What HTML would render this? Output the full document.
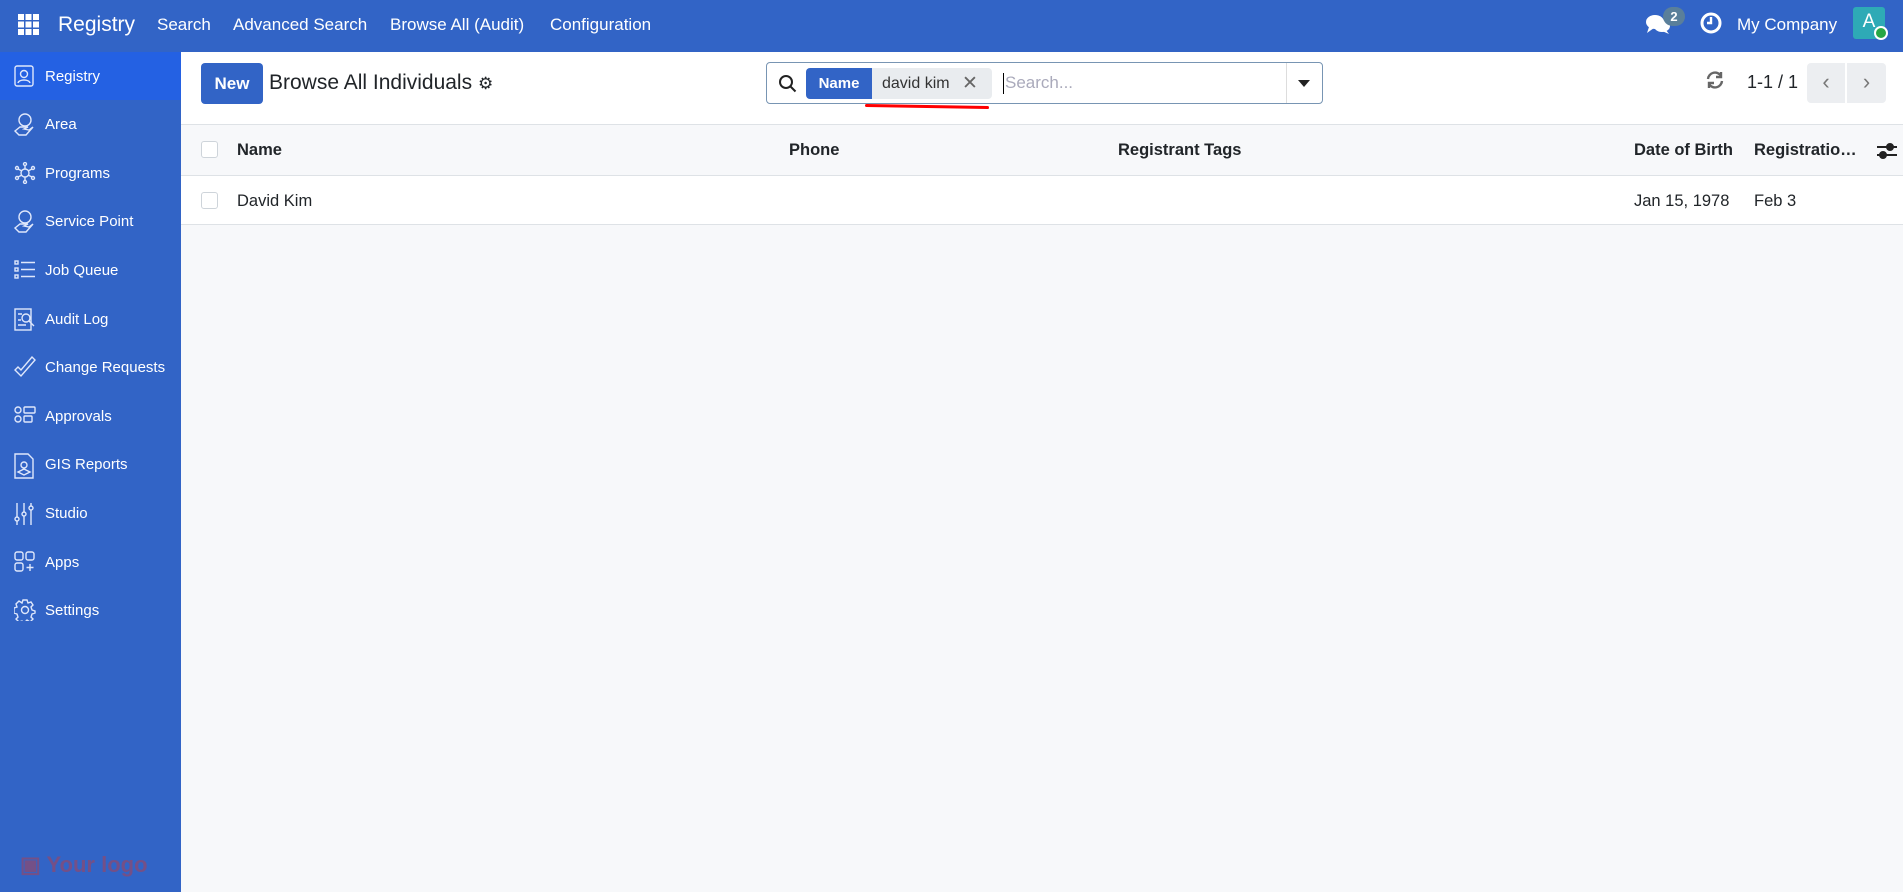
<!DOCTYPE html>
<html><head><meta charset="utf-8"><style>
*{box-sizing:border-box;margin:0;padding:0}
body{width:1903px;height:892px;overflow:hidden;font-family:"Liberation Sans",sans-serif;background:#f7f8fa;position:relative;color:#212529}
.nav{position:absolute;left:0;top:0;width:1903px;height:52px;background:#3264c6;color:#fff}
.nav span{position:absolute;top:15px;font-size:17px}
.side{position:absolute;left:0;top:52px;width:181px;height:840px;background:#3264c6;color:#fff}
.it{position:absolute;left:0;width:181px;height:48px;font-size:15px}
.it .t{position:absolute;left:45px;top:16px}
.it svg{position:absolute;left:14px;top:13px}
.cp{position:absolute;left:181px;top:52px;width:1722px;height:73px;background:#fff;border-bottom:1px solid #dee2e6}
.th{position:absolute;left:181px;top:125px;width:1722px;height:51px;background:#f7f8fa;border-bottom:1px solid #dee2e6;font-weight:bold;font-size:16.5px}
.tr{position:absolute;left:181px;top:176px;width:1722px;height:49px;background:#fff;border-bottom:1px solid #dee2e6;font-size:16.5px}
.th span,.tr span{position:absolute;top:16px}
.cb{position:absolute;left:20px;top:16px;width:17px;height:17px;border:1px solid #ced4da;border-radius:3px;background:#fff}
</style></head><body>
<div class="nav">
<svg style="position:absolute;left:18px;top:14px" width="21" height="21" viewBox="0 0 21 21" fill="#fff"><rect x="0" y="0" width="6" height="6"/><rect x="7.5" y="0" width="6" height="6"/><rect x="15" y="0" width="6" height="6"/><rect x="0" y="7.5" width="6" height="6"/><rect x="7.5" y="7.5" width="6" height="6"/><rect x="15" y="7.5" width="6" height="6"/><rect x="0" y="15" width="6" height="6"/><rect x="7.5" y="15" width="6" height="6"/><rect x="15" y="15" width="6" height="6"/></svg>
<span style="left:58px;top:13px;font-size:21px">Registry</span>
<span style="left:157px">Search</span>
<span style="left:233px">Advanced Search</span>
<span style="left:390px">Browse All (Audit)</span>
<span style="left:550px">Configuration</span>
<svg style="position:absolute;left:1646px;top:13px" width="26" height="22" viewBox="0 0 26 22" fill="#fff"><ellipse cx="9" cy="9" rx="9" ry="7"/><path d="M3 14 L1 20 L8 15Z"/><ellipse cx="16" cy="13" rx="8" ry="6"/><path d="M20 17 L23 21 L16 18Z"/></svg>
<div style="position:absolute;left:1663px;top:7px;width:22px;height:19px;border-radius:10px;background:#5a7f9a;color:#fff;font-size:13px;font-weight:bold;text-align:center;line-height:19px">2</div>
<svg style="position:absolute;left:1700px;top:12px" width="22" height="22" viewBox="0 0 22 22"><circle cx="11" cy="11" r="9" fill="none" stroke="#fff" stroke-width="3"/><path d="M11 5v6h-4" fill="none" stroke="#fff" stroke-width="2.4"/></svg>
<span style="left:1737px">My Company</span>
<div style="position:absolute;left:1853px;top:7px;width:32px;height:32px;background:#2eaab6;border-radius:3px;color:#fff;font-size:19px;text-align:center;line-height:30px">A</div>
<div style="position:absolute;left:1874px;top:26px;width:14px;height:14px;border-radius:50%;background:#28a745;border:2px solid #fff"></div>
</div>
<div class="side">
<div class="it" style="top:0;background:#2461e3"><svg width="20" height="22" viewBox="0 0 20 22" fill="none" stroke="#dfe7fb" stroke-width="1.4"><rect x="1" y="1" width="18" height="20" rx="2"/><circle cx="10" cy="9" r="3.5"/><path d="M4 18c1-4 11-4 12 0"/></svg><span class="t">Registry</span></div>
<div class="it" style="top:48px"><svg width="20" height="24" viewBox="0 0 20 24" fill="none" stroke="#dfe7fb" stroke-width="1.4"><circle cx="11" cy="7" r="6"/><path d="M1 18l5-4h8l-4 2 5 1 4-3-7 8H5z"/></svg><span class="t">Area</span></div>
<div class="it" style="top:97px"><svg width="22" height="22" viewBox="0 0 22 22" fill="none" stroke="#dfe7fb" stroke-width="1.4"><circle cx="11" cy="11" r="4"/><circle cx="11" cy="2" r="1.5"/><circle cx="11" cy="20" r="1.5"/><circle cx="3" cy="6" r="1.5"/><circle cx="19" cy="6" r="1.5"/><circle cx="3" cy="16" r="1.5"/><circle cx="19" cy="16" r="1.5"/><path d="M11 4v3M11 15v3M4 7l4 2M18 7l-4 2M4 15l4-2M18 15l-4-2"/></svg><span class="t">Programs</span></div>
<div class="it" style="top:145px"><svg width="20" height="24" viewBox="0 0 20 24" fill="none" stroke="#dfe7fb" stroke-width="1.4"><circle cx="11" cy="7" r="6"/><path d="M1 18l5-4h8l-4 2 5 1 4-3-7 8H5z"/></svg><span class="t">Service Point</span></div>
<div class="it" style="top:194px"><svg width="22" height="20" viewBox="0 0 22 20" fill="none" stroke="#dfe7fb" stroke-width="1.4"><rect x="1" y="2" width="3" height="3"/><rect x="1" y="9" width="3" height="3"/><rect x="1" y="16" width="3" height="3"/><path d="M7 3.5h14M7 10.5h14M7 17.5h14"/></svg><span class="t">Job Queue</span></div>
<div class="it" style="top:243px"><svg width="22" height="24" viewBox="0 0 22 24" fill="none" stroke="#dfe7fb" stroke-width="1.4"><rect x="1" y="1" width="16" height="21"/><circle cx="12" cy="10" r="4"/><path d="M15 13l5 5M4 6h4M4 12h3M4 17h8"/></svg><span class="t">Audit Log</span></div>
<div class="it" style="top:291px"><svg width="22" height="22" viewBox="0 0 22 22" fill="none" stroke="#dfe7fb" stroke-width="1.4"><path d="M1 14l6 6 14-16-3-3-11 13-3-3z"/></svg><span class="t">Change Requests</span></div>
<div class="it" style="top:340px"><svg width="22" height="20" viewBox="0 0 22 20" fill="none" stroke="#dfe7fb" stroke-width="1.4"><circle cx="4" cy="5" r="3"/><circle cx="4" cy="14" r="3"/><rect x="10" y="2" width="11" height="6" rx="1"/><rect x="10" y="11" width="8" height="6" rx="1"/></svg><span class="t">Approvals</span></div>
<div class="it" style="top:388px"><svg width="20" height="26" viewBox="0 0 20 26" fill="none" stroke="#dfe7fb" stroke-width="1.4"><path d="M1 1h13l5 5v19H1z"/><circle cx="10" cy="12" r="3"/><path d="M4 19l6-3 6 3-6 3z"/></svg><span class="t">GIS Reports</span></div>
<div class="it" style="top:437px"><svg width="20" height="24" viewBox="0 0 20 24" fill="none" stroke="#dfe7fb" stroke-width="1.4"><path d="M3 1v22M10 1v22M17 1v22"/><circle cx="3" cy="17" r="2" fill="#3264c6"/><circle cx="10" cy="12" r="2" fill="#3264c6"/><circle cx="17" cy="6" r="2" fill="#3264c6"/></svg><span class="t">Studio</span></div>
<div class="it" style="top:486px"><svg width="22" height="22" viewBox="0 0 22 22" fill="none" stroke="#dfe7fb" stroke-width="1.4"><rect x="1" y="1" width="8" height="8" rx="2"/><rect x="12" y="1" width="8" height="8" rx="2"/><rect x="1" y="12" width="8" height="8" rx="2"/><path d="M16 13v7M12.5 16.5h7"/></svg><span class="t">Apps</span></div>
<div class="it" style="top:534px"><svg width="22" height="22" viewBox="0 0 22 22" fill="none" stroke="#dfe7fb" stroke-width="1.4"><circle cx="11" cy="11" r="3.5"/><path d="M9 1h4l1 3 3-1 2 3-2 2 1 3 3 1v2l-3 1-1 3 2 2-3 3-3-2-1 1-1 3H9l-1-3-3 1-3-3 2-2-1-3-3-1V9l3-1-1-3 3-3 3 2z"/></svg><span class="t">Settings</span></div>
<div style="position:absolute;left:20px;top:800px;color:#8a4a72;font-weight:bold;font-size:22px;opacity:.75">&#x25A3; Your logo</div>
</div>
<div class="cp">
<div style="position:absolute;left:20px;top:11px;width:62px;height:41px;background:#3264c6;border-radius:4px;color:#fff;font-weight:bold;font-size:17px;text-align:center;line-height:41px">New</div>
<div style="position:absolute;left:88px;top:19px;font-size:21px">Browse All Individuals <span style="font-size:17px">&#9881;</span></div>
<div style="position:absolute;left:585px;top:10px;width:557px;height:42px;border:1px solid #7895b3;border-radius:4px;background:#fff">
<svg style="position:absolute;left:11px;top:11px" width="19" height="19" viewBox="0 0 19 19" fill="none" stroke="#222" stroke-width="2"><circle cx="8" cy="8" r="6"/><path d="M12.5 12.5l5 5"/></svg>
<div style="position:absolute;left:39px;top:5px;width:66px;height:31px;background:#3264c6;border-radius:4px 0 0 4px;color:#fff;font-weight:bold;font-size:15px;text-align:center;line-height:31px">Name</div>
<div style="position:absolute;left:105px;top:5px;width:120px;height:31px;background:#e9ecef;border-radius:0 4px 4px 0;font-size:16px;line-height:31px;padding-left:10px;color:#333">david kim <span style="position:absolute;left:90px;color:#666;font-size:19px">&#x2715;</span></div>
<div style="position:absolute;left:98px;top:42px;width:124px;height:3px;background:#f00;border-radius:2px;transform:rotate(1deg)"></div>
<div style="position:absolute;left:236px;top:10px;width:1px;height:21px;background:#000"></div>
<div style="position:absolute;left:238px;top:10px;font-size:17px;color:#aab">Search...</div>
<div style="position:absolute;left:519px;top:0;width:1px;height:40px;background:#ddd"></div>
<div style="position:absolute;left:531px;top:17px;border-left:6px solid transparent;border-right:6px solid transparent;border-top:7px solid #222"></div>
</div>
<svg style="position:absolute;left:1525px;top:19px" width="18" height="18" viewBox="0 0 18 18" fill="none" stroke="#666" stroke-width="2.4"><path d="M2 8a7 7 0 0 1 13-3M16 10a7 7 0 0 1-13 3"/><path d="M15 1v5h-5M3 17v-5h5"/></svg>
<div style="position:absolute;left:1566px;top:20px;font-size:18px">1-1 / 1</div>
<div style="position:absolute;left:1626px;top:11px;width:38px;height:40px;background:#eceef1;border-radius:4px 0 0 4px;color:#777;font-size:22px;text-align:center;line-height:38px">&#x2039;</div>
<div style="position:absolute;left:1666px;top:11px;width:39px;height:40px;background:#eceef1;border-radius:0 4px 4px 0;color:#777;font-size:22px;text-align:center;line-height:38px">&#x203A;</div>
</div>
<div class="th"><div class="cb"></div><span style="left:56px">Name</span><span style="left:608px">Phone</span><span style="left:937px">Registrant Tags</span><span style="left:1453px">Date of Birth</span><span style="left:1573px">Registratio…</span>
<svg style="position:absolute;left:1696px;top:17px" width="20" height="18" viewBox="0 0 20 18" stroke="#222" stroke-width="2"><path d="M0 5h20M0 13h20"/><circle cx="13" cy="5" r="3" fill="#222"/><circle cx="6" cy="13" r="3" fill="#222"/></svg></div>
<div class="tr"><div class="cb"></div><span style="left:56px">David Kim</span><span style="left:1453px">Jan 15, 1978</span><span style="left:1573px">Feb 3</span></div>
</body></html>
